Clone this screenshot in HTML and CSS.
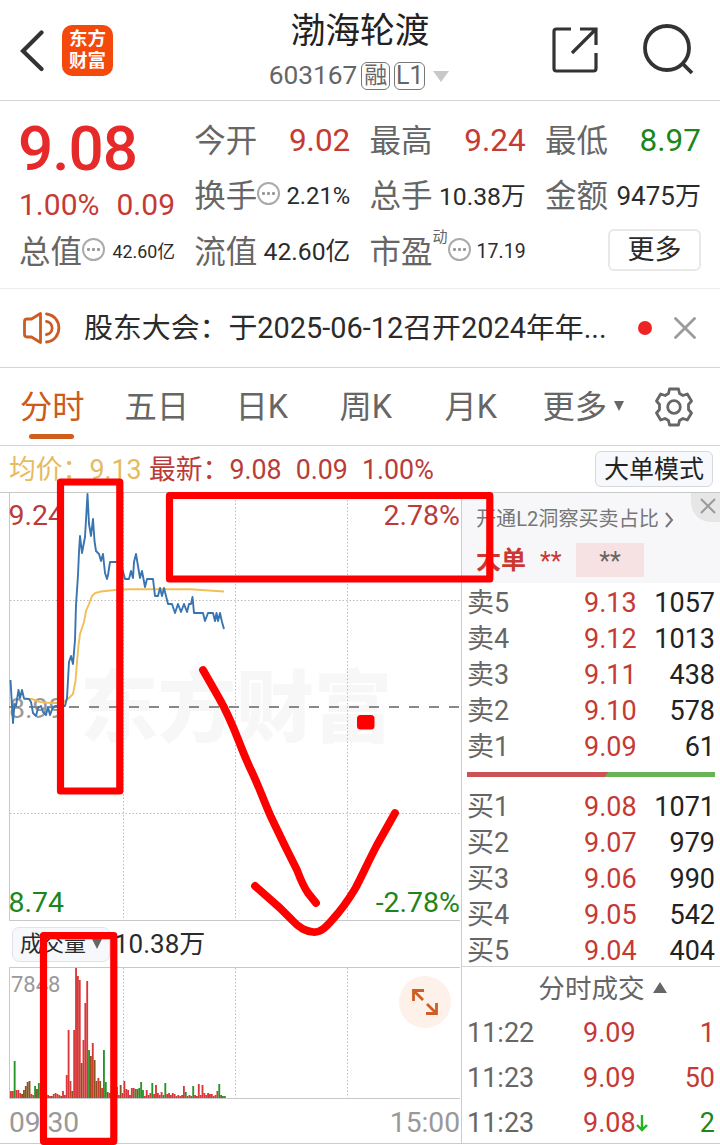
FILE: index.html
```html
<!DOCTYPE html>
<html lang="zh-CN">
<head>
<meta charset="utf-8">
<title>渤海轮渡 603167</title>
<link rel="stylesheet" href="styles.css">
</head>
<body>
<div class="page">
  <header class="topbar">
    <svg class="back" width="24" height="42" viewBox="0 0 24 42"><path d="M21.500 2.500L3 21l18.500 18" fill="none" stroke="#333" stroke-width="4.200" stroke-linecap="round" stroke-linejoin="miter"/></svg>
    <div class="logo"><span>东方</span><span>财富</span></div>
    <div class="stock">
      <div class="stock-name">渤海轮渡</div>
      <div class="stock-code"><span>603167</span><span class="tag">融</span><span class="tag tag-l">L1</span><i class="caret"></i></div>
    </div>
    <svg class="share" width="46" height="46" viewBox="0 0 46 46" fill="none" stroke="#333" stroke-width="3.200"><path d="M19 2H4.500Q2 2 2 4.500V41.500Q2 44 4.500 44H41.500Q44 44 44 41.500V26M28 2H44V18M44 2L20 26"/></svg>
    <svg class="search" width="52" height="52" viewBox="0 0 52 52" fill="none" stroke="#333" stroke-width="3.800"><circle cx="25" cy="24" r="22"/><path d="M40.500 39.500L50 49"/></svg>
  </header>

  <section class="quote">
    <div class="col main">
      <div class="price">9.08</div>
      <div class="change"><span>1.00%</span><span>0.09</span></div>
      <div class="cell"><b>总值</b><i class="dots"></i><span class="s18">42.60亿</span></div>
    </div>
    <div class="col">
      <div class="cell"><b>今开</b><span class="big red">9.02</span></div>
      <div class="cell"><b>换手</b><i class="dots"></i><span class="s24">2.21%</span></div>
      <div class="cell"><b>流值</b><span class="s25">42.60亿</span></div>
    </div>
    <div class="col">
      <div class="cell"><b>最高</b><span class="big red">9.24</span></div>
      <div class="cell"><b>总手</b><span class="s25">10.38万</span></div>
      <div class="cell"><b>市盈</b><sup>动</sup><i class="dots"></i><span class="s19">17.19</span></div>
    </div>
    <div class="col">
      <div class="cell"><b>最低</b><span class="big green">8.97</span></div>
      <div class="cell"><b>金额</b><span class="s26">9475万</span></div>
      <div class="cell end"><span class="more">更多</span></div>
    </div>
  </section>

  <section class="notice">
    <svg class="horn" width="38" height="32" viewBox="0 0 38 32" fill="none" stroke="#cb5c22" stroke-width="2.800" stroke-linejoin="round" stroke-linecap="round"><path d="M17.500 1.500V30.500L8.500 25H4Q1.500 25 1.500 22.500V9.500Q1.500 7 4 7H8.500Z"/><path d="M23.500 9.500C31 10.500 31 21.500 23.500 22.500M23.500 2C40 4 40 28 23.500 30"/></svg>
    <span class="notice-text">股东大会：于2025-06-12召开2024年年...</span>
    <i class="unread"></i>
    <svg width="22" height="22" viewBox="0 0 22 22" stroke="#9b9b9b" stroke-width="2.800" stroke-linecap="round"><path d="M1.500 1.500l19 19M20.500 1.500l-19 19"/></svg>
  </section>

  <nav class="tabs">
    <span class="tab active">分时</span><span class="tab">五日</span><span class="tab">日K</span><span class="tab">周K</span><span class="tab">月K</span>
    <span class="tab wide">更多<i class="caret dark"></i></span>
    <svg class="gear" width="38" height="40" viewBox="-19 -20 38 40" fill="none" stroke="#666" stroke-width="2.800" stroke-linejoin="round"><circle r="6.300"/><path d="M-4.500 -18H4.500L5.500 -13.500L9 -11.500L13.300 -13L17.500 -6L14.500 -2.500V2.500L17.500 6L13.300 13L9 11.500L5.500 13.500L4.500 18H-4.500L-5.500 13.500L-9 11.500L-13.300 13L-17.500 6L-14.500 2.500V-2.500L-17.500 -6L-13.300 -13L-9 -11.500L-5.500 -13.500Z"/></svg>
  </nav>

  <div class="summary">
    <span class="avg">均价：9.13</span><span class="last">最新：9.08</span><span class="last">0.09</span><span class="last">1.00%</span>
    <span class="mode">大单模式</span>
  </div>

  <main class="market">
    <div class="charts">
      <svg class="price-chart" width="461" height="428" viewBox="0 493 461 428">
        <text class="watermark" x="80" y="736" textLength="312">东方财富</text>
        <g class="grid-dots"><path d="M123.500 493V920M235.500 493V920M347.500 493V920M10 600.500H460M10 813.500H460"/></g>
        <path class="grid-line" d="M9.500 493V920.500H460"/>
        <text class="axis muted" x="9" y="718">8.99</text>
        <text class="axis up" x="8.500" y="525">9.24</text>
        <text class="axis up" x="460" y="525" text-anchor="end">2.78%</text>
        <text class="axis down" x="8.500" y="912">8.74</text>
        <text class="axis down" x="460" y="912" text-anchor="end">-2.78%</text>
        <path d="M9 707H460" stroke="#888" stroke-width="1.800" stroke-dasharray="10 10"/>
        <path class="avg-line" d="M24 699L32 699L40 702L50 703H62L68 699L73 694L75.500 681L77 662L78.500 645L80 634L84 622L86 611L89 604L92 596L95 593L101 591.500L115 590L130 589.300H190L224 591.500"/>
        <path class="price-line" d="M10.500 680L13 723L14.500 704L16 706L18.500 690L20 698L22 690L24 698.500L29 699L31 702L33 713L36 716L38 708L41 706L43 712L46 715L48 707L50 715L53 707L56 706H65L67 698L68 680L69 662L71 656L73 664L75 640L76 605L78 575L79 552L80 536L82 553L85 537L86 520L87.500 494L89 524L91 536L93 519L94.500 541L96 551L99 554L101 561L103 554L105 573L107 579L108 575L110 562H117L121 564L125 579H129L131 571L133 578L134 562L136 554L138 566L140 578L142 571L145 587L147 579H153L155 596H158L160 588L162 596L164 588L168 604H172L175 613L178 604L181 612L184 604L187 612L189 604H191L192.500 597L194 613H203L205 621L208 613H213L215 621L216.500 613L218 621L220 613L222 622L224 629"/>
      </svg>
      <div class="volume-head"><span class="volume-tag">成交量<i class="caret dark"></i></span><span>10.38万</span></div>
      <div class="volume-wrap">
        <svg width="461" height="132" viewBox="0 967 461 132">
          <path class="grid-dots" d="M123.500 968V1098M235.500 968V1098M347.500 968V1098"/>
          <path class="grid-line" d="M460 967.500H9.500V1098.500H460"/>
          <text class="scale" x="11" y="992">7848</text>
          <g id="volume-bars"></g>
        </svg>
        <span class="expand"><svg width="28" height="28" viewBox="0 0 28 28" fill="none" stroke="#cd5e24" stroke-width="2.800"><path d="M13 2.500H2.500V13M2.500 2.500L12 12M25.500 15V25.500H15M25.500 25.500L16 16"/></svg></span>
      </div>
      <div class="times"><span>09:30</span><span>15:00</span></div>
    </div>

    <aside class="book">
      <div class="promo">
        <div class="promo-title">开通L2洞察买卖占比<svg width="10" height="16" viewBox="0 0 10 16" fill="none" stroke="#777" stroke-width="2"><path d="M2 1l6 7l-6 7"/></svg></div>
        <div class="promo-row"><strong>大单</strong><span class="stars">**</span><span class="pink">**</span></div>
        <span class="promo-close"><svg width="16" height="16" viewBox="0 0 16 16" stroke="#999" stroke-width="2"><path d="M1 1l14 14M15 1L1 15"/></svg></span>
      </div>
      <div class="levels sell">
        <div class="level"><span>卖5</span><em>9.13</em><span>1057</span></div>
        <div class="level"><span>卖4</span><em>9.12</em><span>1013</span></div>
        <div class="level"><span>卖3</span><em>9.11</em><span>438</span></div>
        <div class="level"><span>卖2</span><em>9.10</em><span>578</span></div>
        <div class="level"><span>卖1</span><em>9.09</em><span>61</span></div>
      </div>
      <div class="ratio"></div>
      <div class="levels buy">
        <div class="level"><span>买1</span><em>9.08</em><span>1071</span></div>
        <div class="level"><span>买2</span><em>9.07</em><span>979</span></div>
        <div class="level"><span>买3</span><em>9.06</em><span>990</span></div>
        <div class="level"><span>买4</span><em>9.05</em><span>542</span></div>
        <div class="level"><span>买5</span><em>9.04</em><span>404</span></div>
      </div>
      <div class="ticks-title">分时成交<i class="caret-up"></i></div>
      <div class="ticks">
        <div class="level"><span>11:22</span><em>9.09</em><span class="red">1</span></div>
        <div class="level"><span>11:23</span><em>9.09</em><span class="red">50</span></div>
        <div class="level"><span>11:23</span><em>9.08<svg width="12" height="18" viewBox="0 0 12 18" fill="none" stroke="#22b222" stroke-width="2.400"><path d="M6 1V16M1 11l5 5l5-5"/></svg></em><span class="green">2</span></div>
      </div>
    </aside>
  </main>

  <svg class="marks" width="720" height="1145" viewBox="0 0 720 1145" fill="none" stroke="#fe0000" stroke-width="7.200" stroke-linejoin="round" stroke-linecap="round">
    <rect x="60.500" y="482" width="59.300" height="309"/>
    <rect x="169.500" y="495.500" width="320.300" height="83.500"/>
    <rect x="43.500" y="935.700" width="70.300" height="205.600"/>
    <rect x="357" y="715" width="17.500" height="14.500" rx="3.500" fill="#fe0000" stroke="none"/>
    <path stroke-width="7.800" d="M203 670L219 698C234 724 238 742 250 768C257 782 264 801 271 817L285 846L297 870Q303 886 308 893L316 903M255 886L280 908L292 920C300 929 306 931 313 932C321 933 327 926 333 919Q344 907 355 889C362 876 368 862 377 845L395 813"/>
  </svg>
</div>
<script src="script.js"></script>
</body>
</html>
```
FILE: styles.css
```css
* { box-sizing: border-box; }
body { margin: 0; background: #fff; font-family: Roboto, "Noto Sans CJK SC", sans-serif; line-height: 1.2; color: #2b2b2b; }
i, em { font-style: normal; }
svg { display: block; flex: none; }
.page { position: relative; width: 720px; height: 1145px; overflow: hidden; white-space: nowrap; }
.red { color: #c53a35; }
.green { color: #1c861c; }
.caret { border: 8px solid transparent; border-top: 11px solid #c8c8c8; border-bottom: 0; }
.caret.dark { border-width: 10px 5.500px 0; border-top-color: #666; }

.topbar { display: flex; height: 101px; border-bottom: 1px solid #d4d4d4; }
.back { margin: 30px 0 0 20px; }
.logo { display: flex; flex-direction: column; align-items: center; justify-content: center; width: 51px; height: 51px; margin: 25px 0 0 18px; border-radius: 10px; background: #f5480b; color: #fff; font-size: 18.500px; font-weight: 700; line-height: 21.500px; }
.stock { display: flex; flex-direction: column; align-items: center; width: 220px; margin: 8px 0 0 137px; }
.stock-name { font-size: 34.800px; line-height: 46px; color: #222; }
.stock-code { display: flex; align-items: center; height: 44px; margin-left: -2px; font-size: 26.300px; color: #666; }
.tag { width: 29px; height: 28px; margin-left: 4px; border: 1.500px solid #777; border-radius: 6px; text-align: center; font-size: 23px; line-height: 25px; }
.tag-l { width: 31px; font-size: 25px; line-height: 26px; }
.stock-code .caret { margin-left: 8px; }
.share { margin: 27px 0 0 82px; }
.search { margin: 24px 0 0 44px; }

.quote { display: grid; grid-template-columns: repeat(4, 156px); column-gap: 19.300px; height: 188px; padding: 12px 0 0 19px; border-bottom: 1px solid #ececec; }
.cell { display: flex; align-items: center; height: 55.600px; }
.cell b { padding-top: 2px; font-weight: 400; font-size: 31.500px; color: #666; }
.cell > span { margin-left: auto; }
.main .cell { height: 56px; }
.price { height: 69px; margin-left: -1px; font-size: 62px; line-height: 71px; font-weight: 500; letter-spacing: -1px; color: #e52a29; }
.change { display: flex; justify-content: space-between; height: 42px; line-height: 46px; font-size: 30px; color: #c53a35; }
.big { font-size: 31.500px; }
.s18 { font-size: 17.800px; }
.s19 { font-size: 19.500px; }
.s24 { font-size: 23.800px; }
.s25 { font-size: 24.700px; }
.s26 { font-size: 26px; }
.dots { width: 23px; height: 23px; margin-top: -5px; border: 2px solid #aaa; border-radius: 50%; background: radial-gradient(circle at 4.500px 9.500px, #999 1.300px, transparent 1.800px), radial-gradient(circle at 9.500px 9.500px, #999 1.300px, transparent 1.800px), radial-gradient(circle at 14.500px 9.500px, #999 1.300px, transparent 1.800px); }
.cell sup { align-self: flex-start; margin-top: 5px; font-size: 15px; line-height: 16px; color: #666; }
.more { width: 93px; height: 42px; border: 2px solid #e8e8e8; border-radius: 6px; text-align: center; font-size: 27px; line-height: 38px; }
.end { padding-bottom: 3px; }

.notice { display: flex; align-items: center; height: 79px; padding-left: 23px; border-bottom: 1px solid #d4d4d4; }
.notice-text { flex: none; width: 530px; margin-left: 23px; font-size: 28.900px; }
.unread { flex: none; width: 14px; height: 14px; margin: 0 22px 0 24px; border-radius: 50%; background: #ec2424; }

.tabs { display: flex; align-items: center; height: 78px; padding-left: 20px; border-bottom: 1px solid #d4d4d4; font-size: 32.300px; line-height: 82px; color: #666; }
.tab { position: relative; flex: none; width: 104.500px; }
.tab:nth-child(2) { width: 111px; }
.tab:nth-child(3) { width: 104px; }
.tab:nth-child(4) { width: 105px; }
.tab:nth-child(5) { width: 98px; }
.tab.active { color: #cc5a18; }
.tab.active::after { content: ""; position: absolute; left: 9px; top: 68px; width: 45px; height: 5px; border-radius: 3px; background: #cf5d1b; }
.tab.wide { display: flex; align-items: center; width: 112px; }
.tab .caret { margin-left: 7px; margin-top: -1px; }

.summary { display: flex; align-items: center; height: 47px; padding: 0 7px 0 9px; border-bottom: 1px solid #c8c8c8; font-size: 26.800px; }
.avg { width: 140px; padding-top: 2px; color: #e5bb61; }
.last { margin-right: 14px; padding-top: 2px; color: #b93c39; }
.mode { width: 118px; height: 36px; margin-left: auto; border: 1.500px solid #d5d9dd; border-radius: 6px; background: #f7f8fb; text-align: center; font-size: 25px; line-height: 36px; color: #222; }

.market { display: flex; height: 651px; border-bottom: 1px solid #ccc; }
.charts { width: 461px; }
.grid-dots { fill: none; stroke: #bbb; stroke-width: 1; stroke-dasharray: 1.500 2; }
.grid-line { fill: none; stroke: #c8c8c8; }
.watermark { font: 900 78px "Noto Sans CJK SC", sans-serif; fill: #f7f7f7; }
.axis { font-size: 28.500px; }
.up { fill: #b93c39; }
.down { fill: #1c861c; }
.muted, .scale { fill: #999; }
.scale { font-size: 22px; }
.avg-line { fill: none; stroke: #f0bf58; stroke-width: 1.900; }
.price-line { fill: none; stroke: #3975b0; stroke-width: 1.900; stroke-linejoin: round; }
.volume-head { display: flex; align-items: center; height: 46px; padding-left: 12px; font-size: 26px; }
.volume-head > span:last-child { padding-top: 2px; }
.volume-tag { display: flex; align-items: center; width: 98px; height: 35px; margin-right: 4px; padding-left: 7px; border: 1px solid #e0e4e8; border-radius: 7px; background: #f7f8fb; font-size: 22px; }
.volume-tag .caret { margin-left: 6px; }
.volume-wrap { position: relative; height: 132px; }
.expand { position: absolute; left: 399px; top: 9px; display: grid; place-items: center; width: 52px; height: 52px; border-radius: 50%; background: #fef1e9; }
.times { display: flex; justify-content: space-between; padding: 0 1px 0 9px; font-size: 28.200px; line-height: 47px; color: #999; }

.book { width: 259px; border-left: 1px solid #ccc; font-size: 27px; }
.promo { position: relative; height: 90px; padding: 12px 0 0 14px; background: #f7f7fa; }
.promo-title { display: flex; align-items: center; height: 29px; font-size: 20.100px; color: #777; }
.promo-title svg { margin-left: 5px; }
.promo-row { display: flex; align-items: center; height: 34px; margin-top: 9px; color: #cb3833; font-size: 25px; }
.promo-row strong { padding-top: 2px; }
.stars { width: 36px; margin-left: 14px; padding-top: 4px; }
.pink { width: 68px; height: 34px; padding-top: 4px; background: #f7e2e3; color: #666; text-align: center; }
.promo-close { position: absolute; right: 0; top: 0; width: 29px; height: 29px; padding: 5px 0 0 9px; background: #e6e6e7; border-bottom-left-radius: 20px; }
.levels { height: 180px; padding: 2px 5px 0; }
.level { display: grid; grid-template-columns: 117px 66px 1fr; align-items: center; height: 36px; color: #666; }
.level em { display: flex; align-items: center; color: #c53a35; }
.level span:last-child { text-align: right; color: #222; }
.level .red:last-child { color: #c53a35; }
.level .green:last-child { color: #1c861c; }
.ratio { height: 5px; margin: 9px 5px 10px; background: linear-gradient(125deg, #cc5255 56%, #68b353 56.300%); }
.ticks-title { display: flex; align-items: center; justify-content: center; height: 43px; margin-top: -1px; padding: 2px 0 0 23px; border-top: 1px solid #d4d4d4; font-size: 26.600px; color: #666; }
.caret-up { margin: -4px 0 0 8px; border: 7.500px solid transparent; border-bottom: 11px solid #666; border-top: 0; }
.ticks { padding: 2px 5px 0; }
.ticks .level { grid-template-columns: 116px 66px 1fr; height: 45px; }
.marks { position: absolute; left: 0; top: 0; pointer-events: none; }
```
FILE: script.js
```js
// One entry per trading minute: r = rising, g = falling, b = mixed.
const minutes = ("r7 r7 g37 r8 r8 r5 b4 b8 b12 b16 b17 r4 r3 g12 b9 g15 r8 r6 r5 b4 r3 r2 b2 r4 r5 r4 r3 b2 r7 r3 " +
  "r23 r68 r17 b7 r68 r130 r122 r118 b35 r58 r95 r117 g48 b42 r55 b38 b17 r20 b17 r10 g48 g16 b6 r5 b6 r8 r9 r11 r3 b13 " +
  "r5 r17 r9 r8 r3 r10 r10 g9 b9 g10 g16 g8 r2 r8 r3 r5 g15 r4 r13 r5 r3 r6 g3 g15 r4 r5 r3 r5 r4 r2 " +
  "r3 r2 r3 r12 g6 r2 r3 b2 g12 r3 r2 r14 r3 r13 r5 r3 r5 r4 r4 r2 r3 r7 g14 b3 g2 g2").split(" ");
const colors = { r: "#d9383a", g: "#27942a", b: "#8a551d" };
const group = document.getElementById("volume-bars");
minutes.forEach((entry, i) => {
  const height = Number(entry.slice(1));
  const bar = document.createElementNS("http://www.w3.org/2000/svg", "rect");
  bar.setAttribute("x", 10 + i * 1.86);
  bar.setAttribute("y", 1098 - height);
  bar.setAttribute("width", 1.86);
  bar.setAttribute("height", height);
  bar.setAttribute("fill", colors[entry[0]]);
  group.append(bar);
});
```
